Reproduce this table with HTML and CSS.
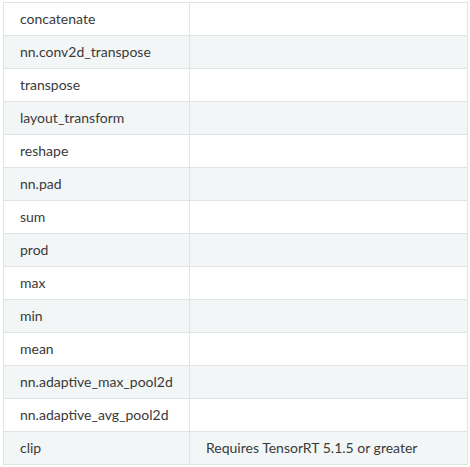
FILE: index.html
```html
<!DOCTYPE html>
<html>
<head>
<meta charset="utf-8">
<link rel="stylesheet" href="styles.css">
</head>
<body>
<table class="ops">
<tbody>
<tr><td>concatenate</td><td></td></tr>
<tr><td>nn.conv2d_transpose</td><td></td></tr>
<tr><td>transpose</td><td></td></tr>
<tr><td>layout_transform</td><td></td></tr>
<tr><td>reshape</td><td></td></tr>
<tr><td>nn.pad</td><td></td></tr>
<tr><td>sum</td><td></td></tr>
<tr><td>prod</td><td></td></tr>
<tr><td>max</td><td></td></tr>
<tr><td>min</td><td></td></tr>
<tr><td>mean</td><td></td></tr>
<tr><td>nn.adaptive_max_pool2d</td><td></td></tr>
<tr><td>nn.adaptive_avg_pool2d</td><td></td></tr>
<tr><td>clip</td><td>Requires TensorRT 5.1.5 or greater</td></tr>
</tbody>
</table>
</body>
</html>
```
FILE: styles.css
```css
html, body {
  margin: 0;
  padding: 0;
  background: #ffffff;
}
body {
  padding: 2px 0 0 3px;
  font-family: Lato, "Open Sans", sans-serif;
  font-size: 14px;
  color: #3a3a3a;
}
.ops {
  border-collapse: collapse;
  width: 465px;
  border: 1px solid #e1e4e5;
}
.ops td {
  border: 1px solid #e1e4e5;
  height: 33px;
  padding: 0 16px;
  box-sizing: border-box;
  line-height: 18px;
  vertical-align: middle;
}
.ops td:first-child {
  width: 186px;
}
.ops tr:nth-child(even) td {
  background: #f3f6f6;
}
```
